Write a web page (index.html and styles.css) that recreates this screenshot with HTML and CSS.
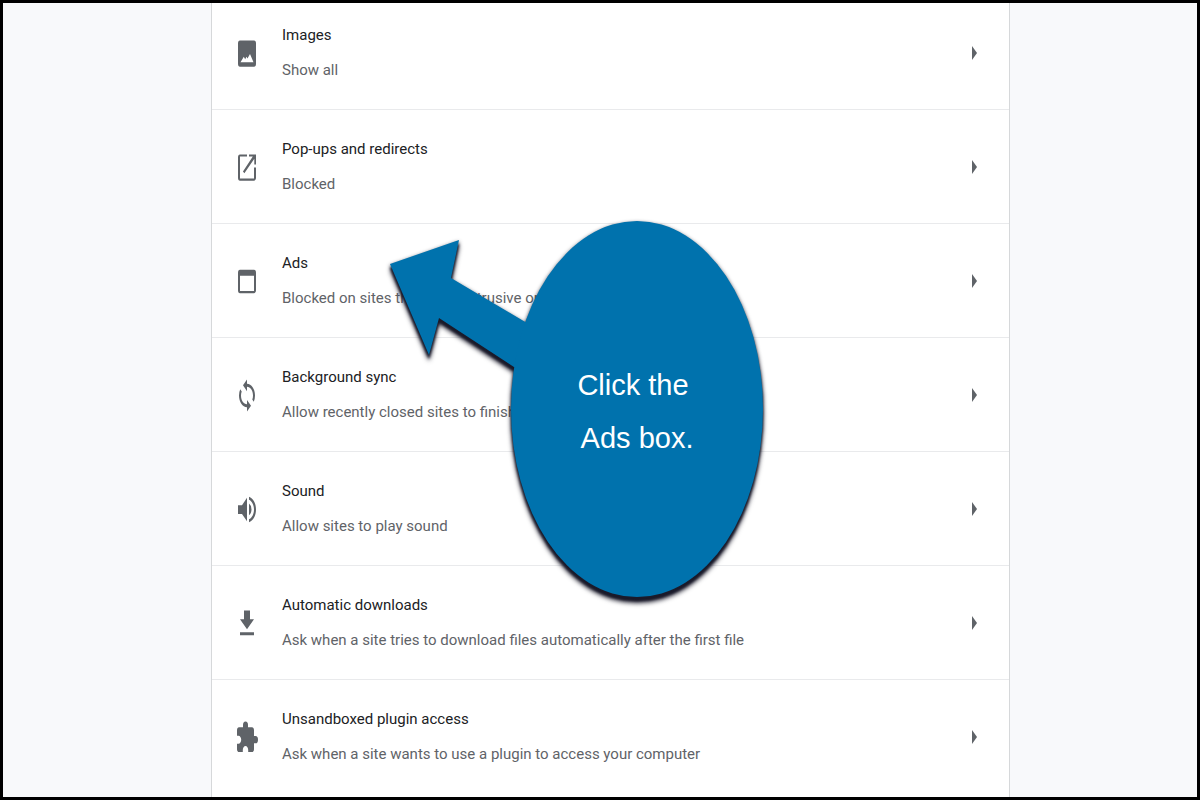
FILE: index.html
```html
<!DOCTYPE html>
<html lang="en">

<head>
    <meta charset="UTF-8">
    <meta name="viewport" content="width=device-width, initial-scale=1.0">
    <title>Site settings</title>
    <link rel="stylesheet" href="styles.css">
</head>

<body>
    <main class="settings">
        <a class="row" href="#images">
            <svg class="icon" viewBox="0 0 24 24" preserveAspectRatio="none" aria-hidden="true">
                <path fill-rule="evenodd" d="M5 3h14a2 2 0 0 1 2 2v14a2 2 0 0 1-2 2H5a2 2 0 0 1-2-2V5a2 2 0 0 1 2-2zm.5 15h13L15 12.300l-2.500 3.200-1-1.200-1.300 1.700-1.400-1.700z" />
            </svg>
            <span class="text">
                <span class="title">Images</span>
                <span class="desc">Show all</span>
            </span>
            <svg class="arrow" viewBox="0 0 5 14" aria-hidden="true"><path d="M0 0l5 7-5 7z" /></svg>
        </a>
        <a class="row" href="#popups">
            <svg class="icon" viewBox="0 0 24 24" preserveAspectRatio="none" aria-hidden="true">
                <path d="M19 19.500H5v-15h7V3H5a2 2 0 0 0-2 2v14a2 2 0 0 0 2 2h14c1.100 0 2-.9 2-2v-7h-2v7.500zM14 3v1.500h3.800l-9.830 10.300 1.410 1.200L19.300 6V10H21V3h-7z" />
            </svg>
            <span class="text">
                <span class="title">Pop-ups and redirects</span>
                <span class="desc">Blocked</span>
            </span>
            <svg class="arrow" viewBox="0 0 5 14" aria-hidden="true"><path d="M0 0l5 7-5 7z" /></svg>
        </a>
        <a class="row" href="#ads">
            <svg class="icon" viewBox="0 0 24 24" preserveAspectRatio="none" aria-hidden="true">
                <path d="M19 4H5a2 2 0 0 0-2 2v12a2 2 0 0 0 2 2h14c1.100 0 2-.9 2-2V6a2 2 0 0 0-2-2zm0 14.500H5V8h14v10.500z" />
            </svg>
            <span class="text">
                <span class="title">Ads</span>
                <span class="desc">Blocked on sites that show intrusive or misleading ads</span>
            </span>
            <svg class="arrow" viewBox="0 0 5 14" aria-hidden="true"><path d="M0 0l5 7-5 7z" /></svg>
        </a>
        <a class="row" href="#sync">
            <svg class="icon" viewBox="0 0 24 24" preserveAspectRatio="none" aria-hidden="true">
                <path d="M12 4V1L8 5l4 4V6c3.310 0 6 2.690 6 6 0 1.010-.25 1.970-.7 2.800l1.460 1.460A7.930 7.930 0 0 0 20 12c0-4.420-3.580-8-8-8zm0 14c-3.310 0-6-2.690-6-6 0-1.010.25-1.970.7-2.800L5.240 7.740A7.930 7.930 0 0 0 4 12c0 4.420 3.580 8 8 8v3l4-4-4-4v3z" />
            </svg>
            <span class="text">
                <span class="title">Background sync</span>
                <span class="desc">Allow recently closed sites to finish sending and receiving data</span>
            </span>
            <svg class="arrow" viewBox="0 0 5 14" aria-hidden="true"><path d="M0 0l5 7-5 7z" /></svg>
        </a>
        <a class="row" href="#sound">
            <svg class="icon" viewBox="0 0 24 24" preserveAspectRatio="none" aria-hidden="true">
                <path d="M3 9v6h4l5 5V4L7 9H3zm13.500 3A4.500 4.500 0 0 0 14 7.970v8.050c1.480-.73 2.500-2.250 2.500-4.020zM14 3.230v2.060c2.890.86 5 3.540 5 6.710s-2.110 5.850-5 6.710v2.060c4.010-.91 7-4.490 7-8.770s-2.990-7.860-7-8.770z" />
            </svg>
            <span class="text">
                <span class="title">Sound</span>
                <span class="desc">Allow sites to play sound</span>
            </span>
            <svg class="arrow" viewBox="0 0 5 14" aria-hidden="true"><path d="M0 0l5 7-5 7z" /></svg>
        </a>
        <a class="row" href="#downloads">
            <svg class="icon" viewBox="0 0 24 24" preserveAspectRatio="none" aria-hidden="true">
                <path d="M19 9h-4V3H9v6H5l7 7 7-7zM5 18v2h14v-2H5z" />
            </svg>
            <span class="text">
                <span class="title">Automatic downloads</span>
                <span class="desc">Ask when a site tries to download files automatically after the first file</span>
            </span>
            <svg class="arrow" viewBox="0 0 5 14" aria-hidden="true"><path d="M0 0l5 7-5 7z" /></svg>
        </a>
        <a class="row" href="#plugins">
            <svg class="icon" viewBox="0 0 24 24" preserveAspectRatio="none" aria-hidden="true">
                <path d="M20.500 11H19V7c0-1.100-.9-2-2-2h-4V3.500a2.500 2.500 0 0 0-5 0V5H4c-1.100 0-1.990.9-1.990 2v3.800H3.500c1.490 0 2.700 1.210 2.700 2.700s-1.210 2.700-2.700 2.700H2V20c0 1.100.9 2 2 2h3.800v-1.500c0-1.490 1.210-2.700 2.700-2.700 1.490 0 2.700 1.210 2.700 2.700V22H17c1.100 0 2-.9 2-2v-4h1.500a2.500 2.500 0 0 0 0-5z" />
            </svg>
            <span class="text">
                <span class="title">Unsandboxed plugin access</span>
                <span class="desc">Ask when a site wants to use a plugin to access your computer</span>
            </span>
            <svg class="arrow" viewBox="0 0 5 14" aria-hidden="true"><path d="M0 0l5 7-5 7z" /></svg>
        </a>

        <!-- callout pointing at the Ads row -->
        <div class="callout">
            <svg class="callout-shape" viewBox="380 210 400 410" aria-hidden="true">
                <path d="M390 264L459 240L451 278L527 323L540 380L514 367L439 318L429 355Z" />
                <ellipse cx="637" cy="409" rx="126" ry="188" />
            </svg>
            <p class="callout-text">Click the<br>&nbsp;Ads box.</p>
        </div>
    </main>
</body>

</html>
```
FILE: styles.css
```css
* {
    box-sizing: border-box;
}

body {
    margin: 0;
    height: 100vh;
    overflow: hidden;
    display: grid;
    grid-template-columns: 208fr 799fr 187fr;
    background-color: #f8f9fb;
    border: 3px solid #000;
    font-family: Roboto, "Liberation Sans", sans-serif;
    font-size: 15px;
}

.settings {
    grid-column: 2;
    position: relative;
    background-color: #fff;
    border-left: 1px solid #d6d8da;
    border-right: 1px solid #d6d8da;
}

.row {
    display: flex;
    align-items: center;
    gap: 23px;
    padding: 22px 32px 21px 23px;
    border-bottom: 1px solid #e9eaec;
    color: #202124;
    text-decoration: none;
}

/* list is scrolled a little */
.row:first-child {
    padding-top: 15px;
}

.row:last-of-type {
    border-bottom: none;
}

.icon {
    width: 24px;
    height: 35px;
    fill: #5f6368;
}

.text {
    flex: 1;
}

.title,
.desc {
    display: block;
    line-height: 35px;
    white-space: nowrap;
}

.desc {
    color: #5f6368;
}

.arrow {
    width: 5px;
    height: 14px;
    fill: #5f6368;
}

.callout {
    position: absolute;
    top: 207px;
    left: 168px;
    width: 400px;
    height: 410px;
}

.callout-shape {
    display: block;
    overflow: visible;
    fill: #0072ad;
    filter: drop-shadow(0 4px 1px #1a1a2a) drop-shadow(0 2px 2px #1a1a2a);
}

.callout-text {
    position: absolute;
    top: 149px;
    left: 128px;
    width: 250px;
    margin: 0;
    color: #fff;
    font-family: "Liberation Sans", Arial, sans-serif;
    font-size: 29px;
    line-height: 53px;
    text-align: center;
}
```
